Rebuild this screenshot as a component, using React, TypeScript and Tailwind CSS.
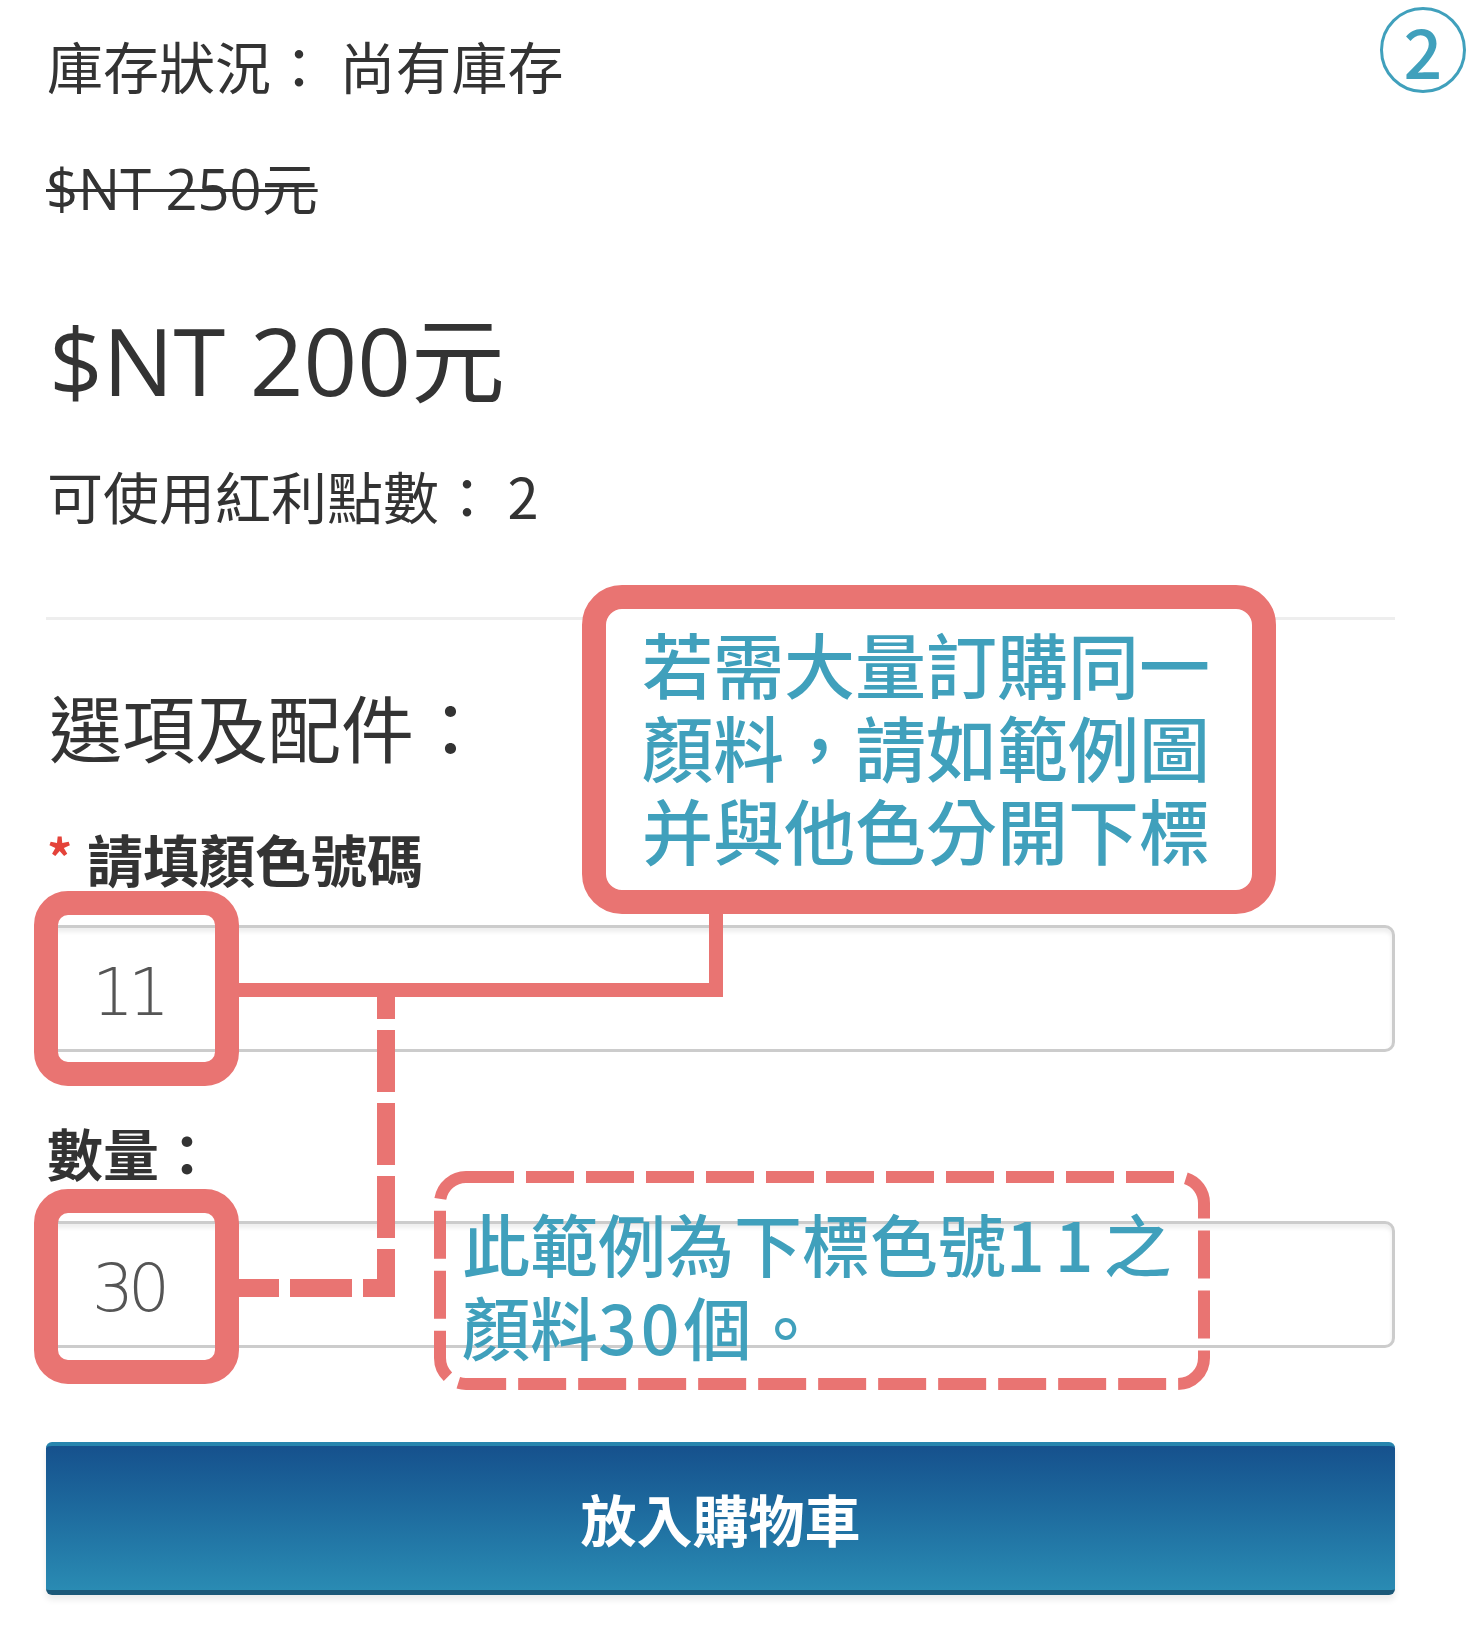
const cjk = "font-['Noto_Sans_CJK_TC',sans-serif]";
const latin = "font-['Open_Sans','Noto_Sans_CJK_TC',sans-serif]";

function Field({ value }: { value: string }) {
  return (
    <div className="h-[127px] rounded-[10px] border-[3px] border-[#ccc] bg-white shadow-[inset_0_4px_4px_rgba(0,0,0,0.07)] flex items-center pl-[43px] pt-[8px]">
      <span className="font-['DejaVu_Sans',sans-serif] font-extralight text-[66px] leading-none tracking-[-6px] text-[#555]">{value}</span>
    </div>
  );
}

export default function App() {
  return (
    <div className={`relative w-[1473px] h-[1629px] overflow-hidden bg-white text-[#333] ${cjk}`}>
      {/* product panel */}
      <div className="pl-[46px] pr-[78px]">
        <div className="mt-[37px] pl-px text-[56px] leading-none">庫存狀況： 尚有庫存</div>
        <div className={`mt-[67px] ${latin} text-[56px] leading-none line-through decoration-[3px] decoration-[#333]`}>$NT 250元</div>
        <div className={`mt-[97px] pl-[3px] ${latin} text-[94px] leading-none`}>$NT 200元</div>
        <div className="mt-[60px] pl-px text-[56px] leading-none">可使用紅利點數： 2</div>

        <div className="mt-[94px] h-[3px] bg-[#eee]" />

        <div className="mt-[69px] pl-[3px] text-[73px] leading-none">選項及配件：</div>

        <div className="mt-[68px] flex items-start font-bold text-[56px] leading-none">
          <span className="w-[41px] pl-[1px] text-[50px] text-[#e4433a]">*</span>
          <span>請填顏色號碼</span>
        </div>
        <div className="mt-[39px]">
          <Field value="11" />
        </div>

        <div className="mt-[72px] pl-px font-bold text-[56px] leading-none">數量：</div>
        <div className="mt-[41px]">
          <Field value="30" />
        </div>

        <button className="mt-[94px] w-full h-[153px] rounded-[6px] border-t-[4px] border-t-[#2785ae] border-b-[5px] border-b-[#1b5878] bg-linear-to-b from-[#16518d] to-[#2a8bb3] shadow-[0_5px_6px_rgba(0,0,0,0.08)] text-white font-bold text-[56px] leading-none">
          放入購物車
        </button>
      </div>

      {/* connectors */}
      <svg className="absolute left-0 top-0 pointer-events-none" width="1473" height="1629">
        <path d="M716 905 V990 H228" fill="none" stroke="#e97472" strokeWidth="14" />
        <path d="M386 997 V1288 H228" fill="none" stroke="#e97472" strokeWidth="18" strokeDasharray="62 11" strokeDashoffset="40" />
        <rect x="440" y="1177" width="764" height="207" rx="26" fill="none" stroke="#e97472" strokeWidth="12" strokeDasharray="48 12" />
      </svg>

      {/* highlight boxes */}
      <div className="absolute left-[34px] top-[891px] w-[205px] h-[195px] rounded-[34px] border-[24px] border-[#e97472]" />
      <div className="absolute left-[34px] top-[1189px] w-[205px] h-[195px] rounded-[34px] border-[24px] border-[#e97472]" />

      {/* callout */}
      <div className="absolute left-[582px] top-[585px] w-[694px] h-[329px] rounded-[40px] border-[24px] border-[#e97472] bg-white pl-[36px] pt-[12px] text-[#40a0bc] font-medium text-[71px] leading-[83px] whitespace-nowrap">
        <div>若需大量訂購同一</div>
        <div>顏料，請如範例圖</div>
        <div>并與他色分開下標</div>
      </div>

      <div className="absolute left-[462px] top-[1201px] text-[#40a0bc] font-medium text-[68px] leading-[83px] whitespace-nowrap">
        <div>
          此範例為下標色號<span className="tracking-[10px]">11</span>之
        </div>
        <div>
          顏料<span className="tracking-[4px]">30</span>個。
        </div>
      </div>

      {/* step badge */}
      <div className="absolute left-[1380px] top-[7px] w-[86px] h-[86px] rounded-full border-[3px] border-[#40a0bc] flex items-center justify-center text-[#40a0bc] font-medium text-[68px] leading-none">
        2
      </div>
    </div>
  );
}
